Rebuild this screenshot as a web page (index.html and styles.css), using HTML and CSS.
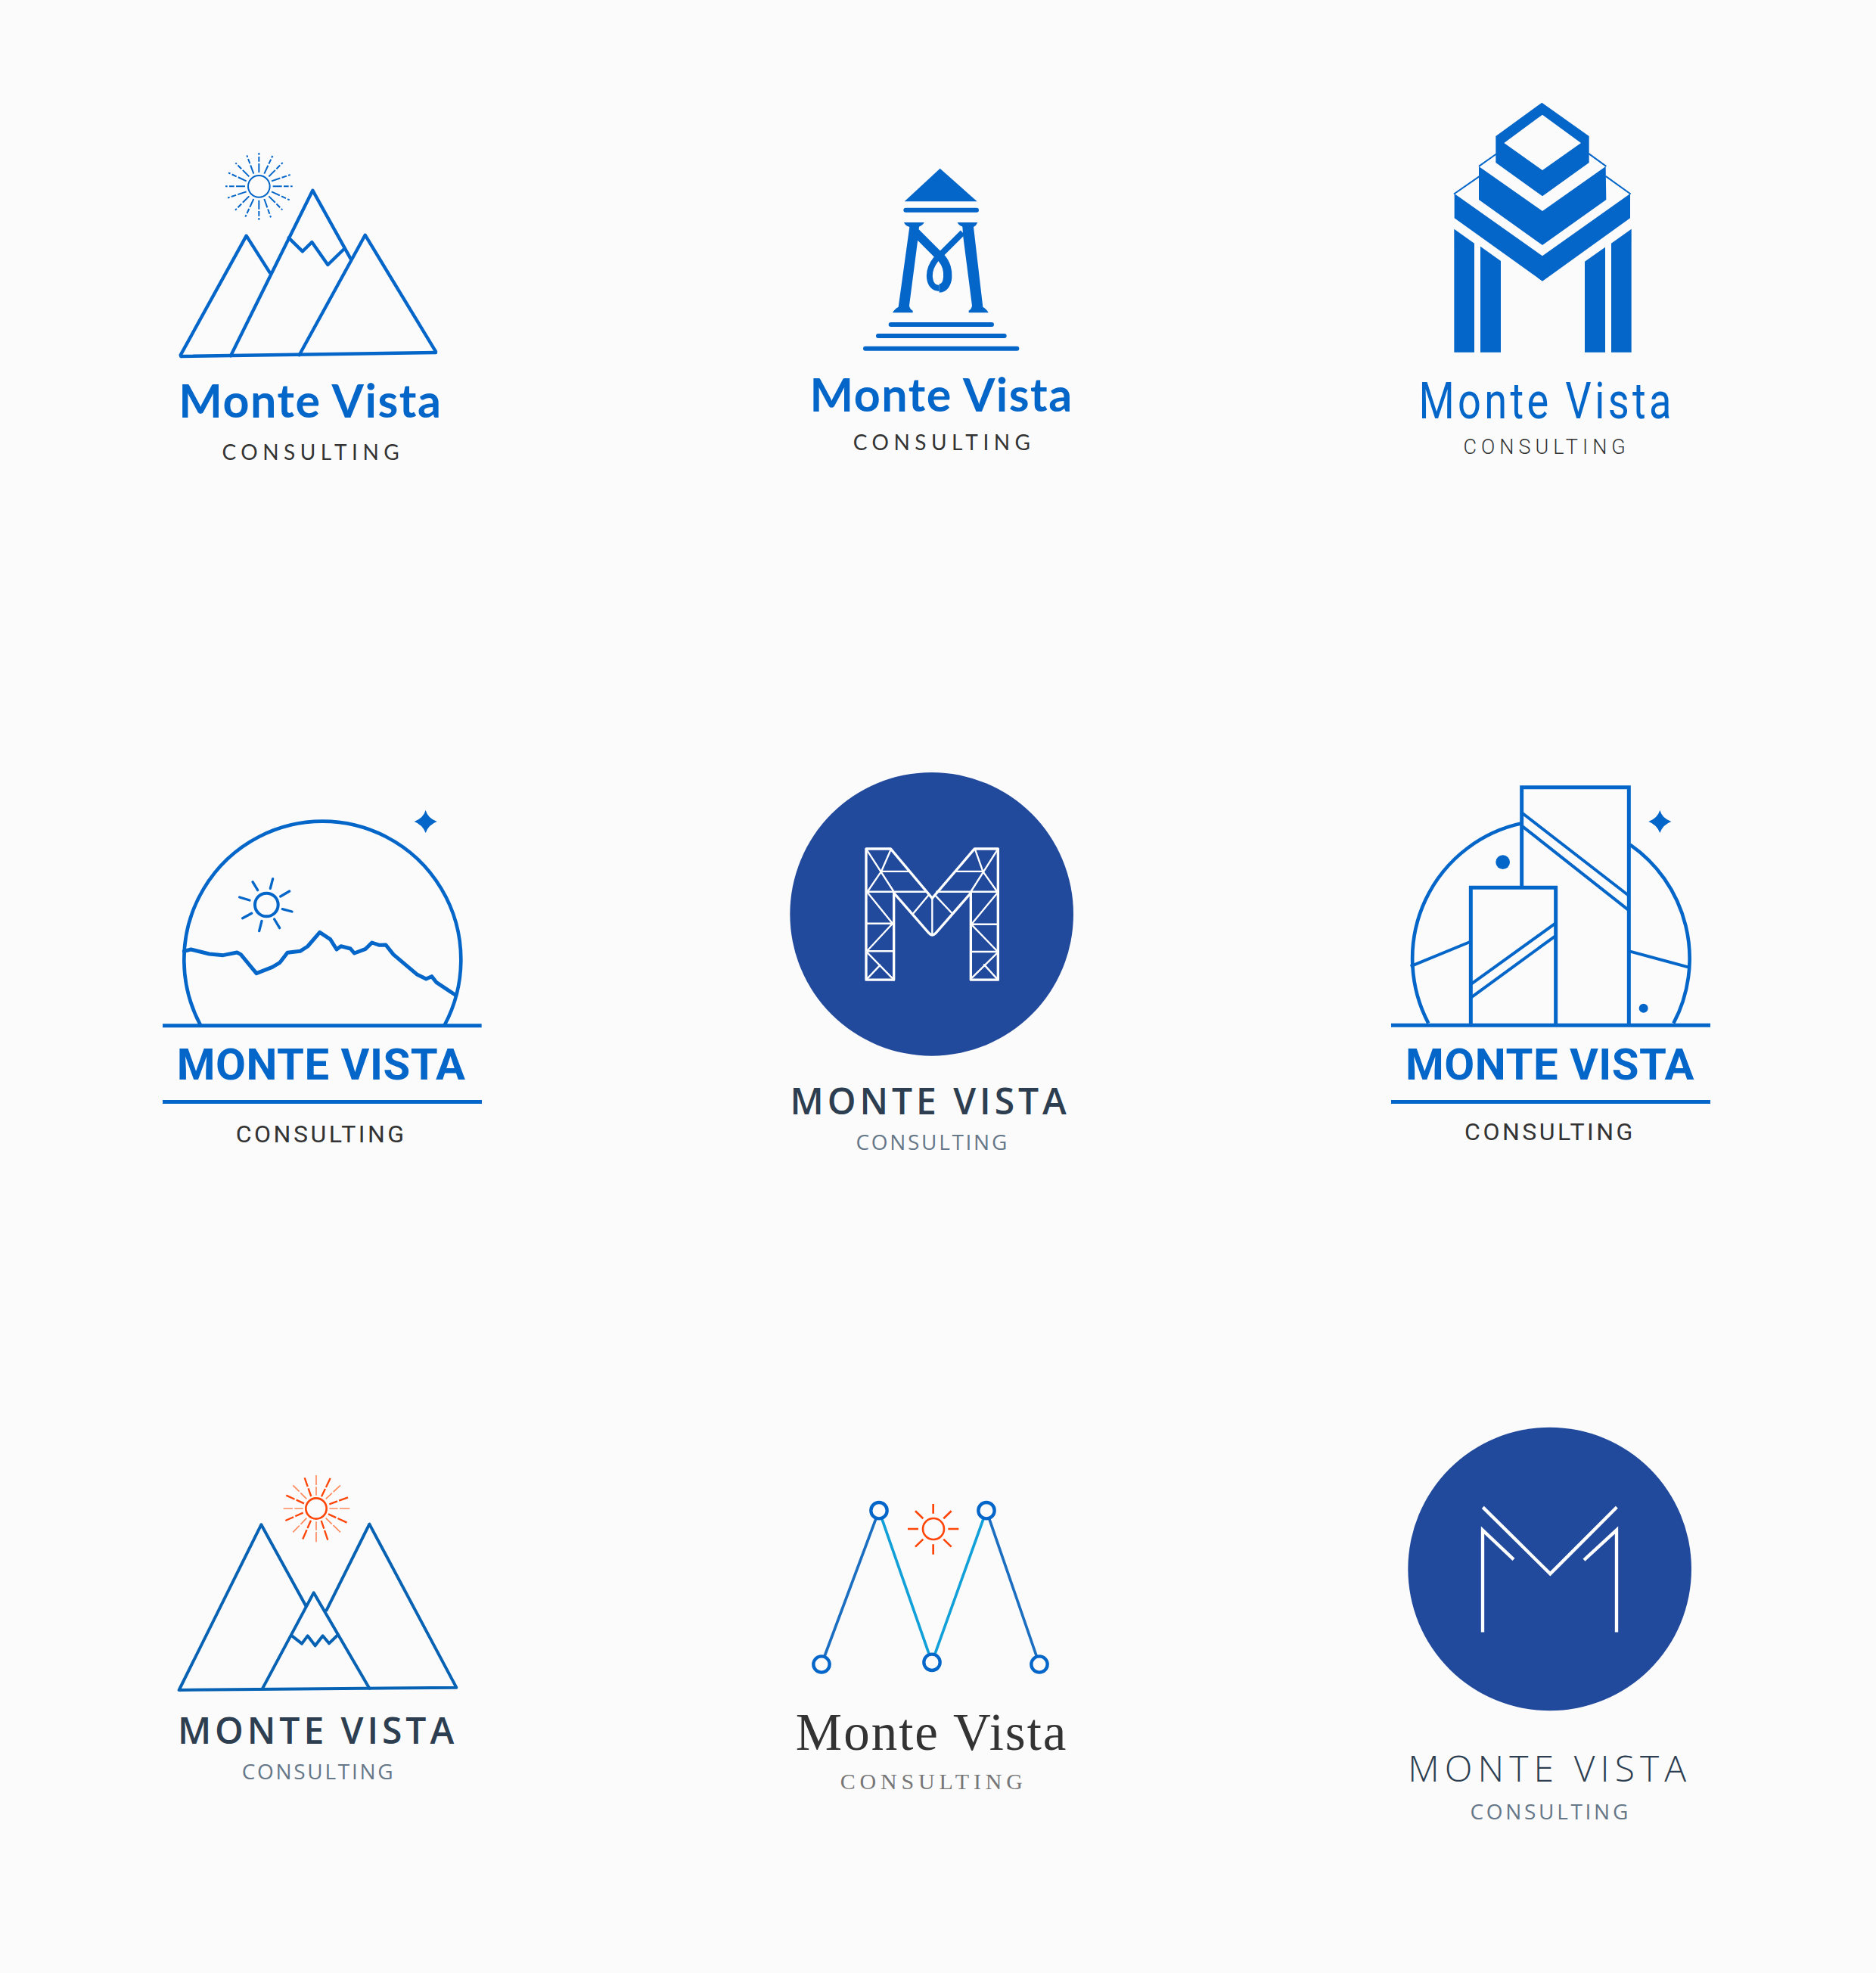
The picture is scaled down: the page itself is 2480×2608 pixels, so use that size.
FILE: index.html
```html
<!DOCTYPE html>
<html lang="en">
<head>
<meta charset="utf-8">
<title>Monte Vista Consulting logos</title>
<link rel="stylesheet" href="styles.css">
</head>
<body>
<main class="sheet">

<article class="logo l1">
<svg class="mark" viewBox="0 0 1262 900" width="420.67" height="300">
  <g class="ln" stroke-width="13">
    <path d="M118 873L1128 858"/>
    <path d="M470 541L377 395L116 868L118 873"/>
    <path d="M315 871L640 215L790 485"/>
    <path d="M587 868L848 392L1128 854L1128 858"/>
    <path d="M545 403L600 457L637 420L700 510L765 447"/>
  </g>
  <circle class="ln" cx="427" cy="199" r="43" stroke-width="6"/>
  <g class="ray-blue">
    <path d="M482 199H560M372 199H294M427 144V66M427 254V332"/>
    <path d="M477 178L551 153M377 220L303 245M448 149L481 78M406 249L373 320"/>
    <path d="M466 160L521 105M388 238L333 293M406 149L379 76M448 249L474 322"/>
    <path d="M377 178L306 145M477 220L548 253M388 160L334 106M466 238L520 292"/>
  </g>
</svg>
<h2 class="title rounded">Monte Vista</h2>
<p class="sub rounded-sub">CONSULTING</p>
</article>

<article class="logo l2">
<svg class="mark" viewBox="0 0 1228 810" width="409.33" height="270">
  <polygon class="fl" points="608,68 755,199 467,199"/>
  <g class="ln" stroke-width="18">
    <path d="M472 233H753M413 687H813M363 732H863M312 782H913"/>
  </g>
  <path class="fl" d="M465 282H545Q540 293 525 299L520 350L486 612Q488 626 500 632V640H420Q425 628 443 617L487 300Q470 295 465 282Z"/>
  <path class="fl" d="M757 282H677Q682 293 697 299L700 340L735 612Q733 626 722 632V640H800Q795 628 778 617L741 300Q752 295 757 282Z"/>
  <path class="ln butt" stroke-width="34" d="M512 322L615 425C650 465 645 543 605 543"/>
  <path class="ln butt" stroke-width="24" d="M605 543C562 543 552 478 592 428L698 322"/>
</svg>
<h2 class="title rounded">Monte Vista</h2>
<p class="sub rounded-sub">CONSULTING</p>
</article>

<article class="logo l3">
<svg class="mark" viewBox="0 0 1090 1050" width="363.33" height="350">
  <path class="fl" fill-rule="evenodd" d="M535 47L722 180V285L537 418L352 285V180ZM537 95L385 207L537 315L690 207Z"/>
  <polygon class="fl" points="285,300 537,477 788,300 790,432 537,612 285,432"/>
  <polygon class="fl" points="188,408 537,655 885,408 885,505 537,755 188,505"/>
  <polygon class="fl" points="187,548 267,605 267,1037 187,1037"/>
  <polygon class="fl" points="291,617 372,675 372,1037 291,1037"/>
  <polygon class="fl" points="705,677 786,620 786,1037 705,1037"/>
  <polygon class="fl" points="810,605 890,548 890,1037 810,1037"/>
  <path class="ln" stroke-width="6" d="M352 252L287 298M722 250L788 298M286 340L188 408M790 340L885 408"/>
</svg>
<h2 class="title cond">Monte Vista</h2>
<p class="sub cond-sub">CONSULTING</p>
</article>

<article class="logo l4">
<svg class="mark" viewBox="0 0 1354 960" width="451.33" height="320">
  <path class="ln butt" stroke-width="14" d="M195 945A549 549 0 1 1 1163 945"/>
  <path class="ln butt" stroke-width="15" d="M45 947H1310"/>
  <path class="fl" d="M1088 93Q1097 125 1133 138Q1100 150 1088 183Q1075 150 1043 138Q1078 125 1088 93Z"/>
  <circle class="ln" cx="457" cy="468" r="46" stroke-width="12"/>
  <path class="ln" stroke-width="10" d="M482 365L472 403M548 414L512 435M558 495L520 485M509 560L488 525M428 572L438 532M362 521L398 502M350 438L390 450M402 377L422 410"/>
  <path class="ln" stroke-width="15" d="M130 652L157 645L230 663L285 668L340 657L355 665L417 740L480 715L510 697L540 658L590 652L620 633L668 577L710 605L735 645L752 632L790 642L805 660L850 643L875 618L905 628L930 627L960 665L1055 745L1090 762L1112 752L1130 775L1175 805L1205 825"/>
</svg>
<h2 class="title heavy">MONTE VISTA</h2>
<div class="rule"></div>
<p class="sub heavy-sub">CONSULTING</p>
</article>

<article class="logo l5">
<svg class="mark" viewBox="0 0 1150 1200" width="383.33" height="400">
  <circle class="disc" cx="575" cy="595" r="562"/>
  <g transform="scale(1 1.0331)">
    <path class="wl" stroke-width="10" d="M315 325H412L577 515L745 325H838V828H730V495L590 650Q577 662 565 650L425 495V828H315Z"/>
    <path class="wl" stroke-width="7" d="M318 330L425 490M412 330L375 412L320 490M375 412H487M318 490H555M318 490L420 612M318 612H420L318 718M318 718H425M318 722L425 828M370 772L318 825M577 515V655M565 500L503 572M590 505L655 572M835 330L730 490M748 330L778 412L835 490M668 412H778M595 490H835M835 495L735 612M735 615H838M735 618L835 718M735 720H838M835 725L735 820M783 770L835 825"/>
  </g>
</svg>
<h2 class="title open-bold">MONTE VISTA</h2>
<p class="sub open-sub">CONSULTING</p>
</article>

<article class="logo l6">
<svg class="mark" viewBox="0 0 1320 990" width="440" height="330">
  <g class="ln butt">
    <path stroke-width="14" d="M175 968A549 549 0 0 1 545 175M975 260A549 549 0 0 1 1147 968"/>
    <path stroke-width="15" d="M545 430V32H970V970M343 970V430H680V970M27 976H1293"/>
    <path stroke-width="12" d="M548 135L970 462M548 187L970 520M345 812L678 572M345 865L678 622M104 742L340 645M975 683L1205 745"/>
  </g>
  <circle class="fl" cx="470" cy="329" r="28"/>
  <circle class="fl" cx="1028" cy="908" r="18"/>
  <path class="fl" d="M1093 123Q1102 155 1138 168Q1105 180 1093 213Q1080 180 1048 168Q1083 155 1093 123Z"/>
</svg>
<h2 class="title heavy">MONTE VISTA</h2>
<div class="rule"></div>
<p class="sub heavy-sub">CONSULTING</p>
</article>

<article class="logo l7">
<svg class="mark" viewBox="0 0 1200 930" width="400" height="310">
  <g class="ln deep" stroke-width="12">
    <path d="M553 578L376 256L50 912L1150 902L805 254L635 595"/>
    <path d="M380 908L584 526L805 905"/>
    <path d="M495 695L537 728L560 697L590 736L620 697L645 727L680 693"/>
  </g>
  <circle class="ln hot" cx="594" cy="192" r="41" stroke-width="8"/>
  <g class="ray-soft">
    <path d="M646 192H728M542 192H464M594 140V60M594 244V326"/>
    <path d="M632 154L690 100M556 230L502 286M556 154L502 100M632 230L690 286"/>
  </g>
  <g class="ray-hot">
    <path d="M646 175L720 148M542 209L472 240M615 145L650 72M573 239L540 315M574 144L548 70M614 240L640 317M546 172L475 140M642 214L716 248"/>
  </g>
</svg>
<h2 class="title open-bold">MONTE VISTA</h2>
<p class="sub open-sub">CONSULTING</p>
</article>

<article class="logo l8">
<svg class="mark" viewBox="0 0 1150 790" width="383.33" height="263.33">
  <path class="ln steel" stroke-width="11" d="M138 720L366 110M792 110L1002 720"/>
  <path class="ln sky" stroke-width="11" d="M366 110L576 712L792 110"/>
  <g class="node" stroke-width="13">
    <circle cx="366" cy="110" r="32"/>
    <circle cx="792" cy="110" r="32"/>
    <circle cx="138" cy="720" r="32"/>
    <circle cx="576" cy="712" r="32"/>
    <circle cx="1002" cy="720" r="32"/>
  </g>
  <circle class="ln hot" cx="582" cy="183" r="42" stroke-width="8"/>
  <path class="ln hot butt" stroke-width="8" d="M640 183H682M522 183H480M581 122V84M581 244V284M622 142L653 112M541 224L510 254M541 142L510 112M622 224L653 254"/>
</svg>
<h2 class="title slab">Monte Vista</h2>
<p class="sub slab-sub">CONSULTING</p>
</article>

<article class="logo l9">
<svg class="mark" viewBox="0 0 1252 1160" width="417.33" height="386.67">
  <circle class="disc" cx="626" cy="582" r="562"/>
  <g transform="scale(1 1.0331)">
    <path class="wl butt" stroke-width="13" d="M360 806V414L483 527M891 806V414L762 529M361 326L628 582L892 326"/>
  </g>
</svg>
<h2 class="title open-light">MONTE VISTA</h2>
<p class="sub open-sub">CONSULTING</p>
</article>

</main>
</body>
</html>
```

FILE: styles.css
```css
* { box-sizing: border-box; }

html, body {
  margin: 0;
  background: #fbfbfc;
}

.sheet {
  width: 2480px;
  height: 2608px;
  display: grid;
  grid-template-columns: 827px 826px 827px;
  grid-template-rows: 870px 870px 868px;
  justify-items: start;
  align-items: start;
}

.logo {
  display: flex;
  flex-direction: column;
  align-items: center;
}

.mark { display: block; flex: none; }

.title, .sub {
  margin: 0;
  line-height: 1;
  white-space: nowrap;
}

.title { font-weight: 400; }

/* marks */
.ln { fill: none; stroke: #0466c8; stroke-linecap: round; stroke-linejoin: round; }
.fl { fill: #0466c8; }
.disc { fill: #224a9c; }
.wl { fill: none; stroke: #fff; stroke-linecap: round; stroke-linejoin: round; }
.ln.butt, .wl.butt { stroke-linecap: butt; stroke-linejoin: miter; }
.ln.deep { stroke: #0762b3; }
.ln.hot { stroke: #ff4608; }
.ln.steel { stroke: #1c6fc0; }
.ln.sky { stroke: #12a0d8; }
.node { fill: #fbfbfc; stroke: #0466c8; }

.ray-blue { fill: none; stroke: #0466c8; stroke-width: 6; stroke-dasharray: 36 7 20 7 10 7; }
.ray-soft { fill: none; stroke: #ff8a5c; stroke-width: 5; stroke-dasharray: 34 7 40; }
.ray-hot { fill: none; stroke: #ff4608; stroke-width: 7; stroke-dasharray: 34 7 40; }

/* type */
.rounded { font: 700 61px/1 Lato, sans-serif; color: #0466c8; letter-spacing: 1.5px; }
.rounded-sub { font: 400 28px/1 Lato, sans-serif; color: #333; letter-spacing: 6.5px; padding-left: 7px; }
.cond { font: 400 66px/1 Roboto, sans-serif; color: #0466c8; letter-spacing: 5.3px; padding-left: 8px; transform: scaleX(.82); }
.cond-sub { font: 300 27px/1 Roboto, sans-serif; color: #333; letter-spacing: 6px; padding-left: 6px; }
.heavy { font: 700 58px/1 Roboto, sans-serif; color: #0466c8; letter-spacing: .5px; padding-right: 2px; }
.heavy-sub { font: 400 32px/1 Roboto, sans-serif; color: #333; letter-spacing: 3.5px; padding-right: 2px; }
.open-bold { font: 600 48px/1 "Open Sans", sans-serif; color: #2c3e50; letter-spacing: 4.95px; padding-right: 4px; }
.open-light { font: 300 48px/1 "Open Sans", sans-serif; color: #2c3e50; letter-spacing: 7.1px; }
.open-sub { font: 400 28px/1 "Open Sans", sans-serif; color: #667788; letter-spacing: 2.7px; padding-left: 2px; }
.slab { font: 400 69px/1 "Liberation Serif", serif; color: #333; letter-spacing: 2px; }
.slab-sub { font: 400 30px/1 "Liberation Serif", serif; color: #777; letter-spacing: 5.8px; padding-left: 5px; }

.rule { width: 422px; height: 5px; background: #0466c8; flex: none; }

/* placement of each logo in its cell */
.l1 { margin: 180px 0 0 200px; }
.l1 .title { margin-top: 18px; }
.l1 .sub { margin-top: 24px; }

.l2 { margin: 200px 0 0 213px; }
.l2 .title { margin-top: 20px; }
.l2 .sub { margin-top: 19px; }

.l3 { margin: 120px 0 0 207px; width: 363.33px; }
.l3 .title { margin-top: 28px; }
.l3 .sub { margin-top: 14px; }

.l4 { margin: 170px 0 0 200px; }
.l4 .title { margin-top: 18px; }
.l4 .rule { margin-top: 18px; }
.l4 .sub { margin-top: 24px; }

.l5 { margin: 140px 0 0 213px; }
.l5 .title { margin-top: 21px; }
.l5 .sub { margin-top: 16px; }

.l6 { margin: 160px 0 0 177px; }
.l6 .title { margin-top: 18px; }
.l6 .rule { margin-top: 18px; }
.l6 .sub { margin-top: 21px; }

.l7 { margin: 190px 0 0 220px; }
.l7 .title { margin-top: 23px; padding-right: 0; }
.l7 .sub { margin-top: 16px; }

.l8 { margin: 220px 0 0 213px; }
.l8 .title { margin-top: 33px; }
.l8 .sub { margin-top: 15px; }

.l9 { margin: 140px 0 0 187px; }
.l9 .title { margin-top: 46px; }
.l9 .sub { margin-top: 19px; letter-spacing: 3.7px; }
```
